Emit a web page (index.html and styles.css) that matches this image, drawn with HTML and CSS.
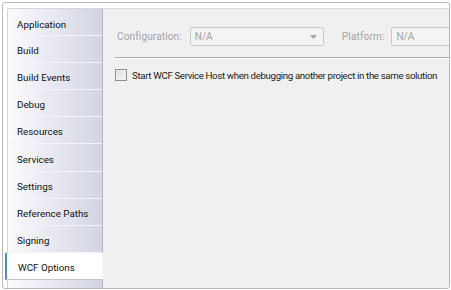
FILE: index.html
```html
<!DOCTYPE html>
<html lang="en">
<head>
    <meta charset="UTF-8">
    <title>WCF Options</title>
    <link rel="stylesheet" href="styles.css">
</head>
<body>
    <div class="window">
        <div class="tabs">
            <div class="tab">Application</div>
            <div class="tab">Build</div>
            <div class="tab">Build Events</div>
            <div class="tab">Debug</div>
            <div class="tab">Resources</div>
            <div class="tab">Services</div>
            <div class="tab">Settings</div>
            <div class="tab">Reference Paths</div>
            <div class="tab">Signing</div>
            <div class="tab active">WCF Options</div>
        </div>

        <div class="panel">
            <div class="config-row">
                <span class="lbl">Configuration:</span>
                <div class="combo combo-config">
                    <span>N/A</span>
                    <svg class="arrow" width="7" height="4" viewBox="0 0 7 4"><path d="M0 0h7L3.5 4z" fill="#a6a6a6"/></svg>
                </div>
                <span class="lbl lbl-platform">Platform:</span>
                <div class="combo combo-platform">
                    <span>N/A</span>
                </div>
            </div>

            <div class="separator"></div>

            <label class="check-row">
                <span class="checkbox"></span>
                <span class="check-text">Start WCF Service Host when debugging another project in the same solution</span>
            </label>
        </div>
    </div>
</body>
</html>
```

FILE: styles.css
```css
/* Ventana de propiedades del proyecto */
body {
    margin: 2px 0 0 2px;
    background: #ffffff;
    font-family: Roboto, "Noto Sans", sans-serif;
    font-size: 10px;
    color: #1b1b1b;
}

.window {
    width: 448px;
    height: 287px;
    box-sizing: border-box;
    border: 1px solid #b9b9b9;
    border-radius: 3px;
    background: #ffffff;
    display: flex;
    padding: 5px 0 0 4px;
    overflow: hidden;
}

.tabs {
    width: 94px;
    flex-shrink: 0;
    border-top: 1px solid #d3d4de;
    border-left: 1px solid #d3d4de;
    border-top-left-radius: 3px;
    background: linear-gradient(to right, #fbfbfd, #d2d4e3);
    position: relative;
    z-index: 1;
}

.tab {
    height: 27.1px;
    box-sizing: border-box;
    padding: 3px 0 0 9px;
    display: flex;
    align-items: center;
    border-bottom: 1px solid #f4f5fa;
    font-size: 9.8px;
    color: #111111;
}

.tab:first-child {
    padding-top: 5px;
}

.tab.active {
    background: #ffffff;
    margin-left: -3px;
    margin-right: -1px;
    padding-left: 11px;
    border-left: 2px solid #4a90d9;
    border-bottom: 1px solid #c3c5d5;
}

.panel {
    flex: 1;
    background: #f0f0f0;
    border-left: 1px solid #b4b6c8;
    border-top: 1px solid #d8d9e2;
    padding: 18px 0 0 14px;
    overflow: hidden;
    color: #1b1b1b;
}

.config-row {
    display: flex;
    align-items: center;
    white-space: nowrap;
}

.lbl {
    color: #a3a3a3;
    margin-right: 8px;
    letter-spacing: 0.15px;
}

.lbl-platform {
    margin-left: 18px;
    margin-right: 7px;
}

.combo {
    height: 19px;
    box-sizing: border-box;
    border: 1px solid #c9c9c9;
    border-radius: 2px;
    background: #f4f4f4;
    color: #a3a3a3;
    display: flex;
    align-items: center;
    padding-left: 4px;
    flex-shrink: 0;
}

.combo-config {
    width: 134px;
    justify-content: space-between;
    padding-right: 6px;
}

.combo-platform {
    width: 80px;
}

.separator {
    margin: 11px 0 0 -2px;
    border-top: 1px solid #a9a9a9;
    border-bottom: 1px solid #ffffff;
}

.check-row {
    display: flex;
    align-items: center;
    margin: 10px 0 0 -2px;
    white-space: nowrap;
}

.checkbox {
    width: 12px;
    height: 12px;
    flex-shrink: 0;
    box-sizing: border-box;
    border: 1px solid #8e8f8f;
    background: linear-gradient(135deg, #dcdcdc, #f7f7f7);
    box-shadow: inset 0 0 0 1px #f3f3f3;
    margin-right: 5px;
}

.check-text {
    font-size: 9.7px;
    letter-spacing: -0.35px;
}
```
